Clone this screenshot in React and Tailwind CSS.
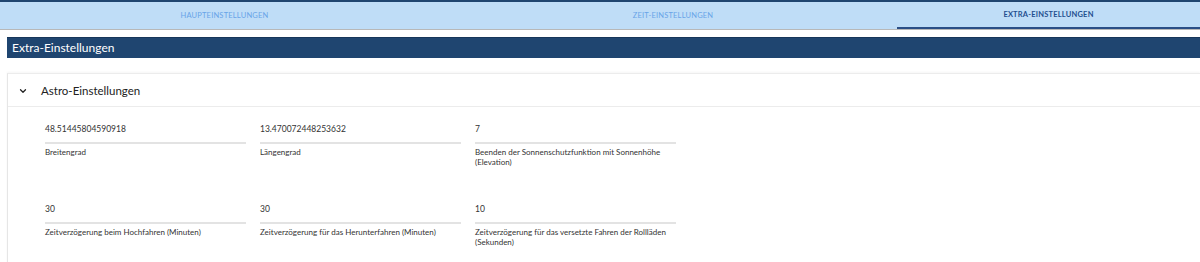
import { ChevronDown } from 'lucide-react'

const tabs = [
  { label: 'HAUPTEINSTELLUNGEN', w: 'w-[449px]' },
  { label: 'ZEIT-EINSTELLUNGEN', w: 'w-[448px]' },
  { label: 'EXTRA-EINSTELLUNGEN', w: 'flex-1', active: true },
]

const rows = [
  [
    { value: '48.51445804590918', label: 'Breitengrad' },
    { value: '13.470072448253632', label: 'Längengrad' },
    { value: '7', label: 'Beenden der Sonnenschutzfunktion mit Sonnenhöhe (Elevation)' },
  ],
  [
    { value: '30', label: 'Zeitverzögerung beim Hochfahren (Minuten)' },
    { value: '30', label: 'Zeitverzögerung für das Herunterfahren (Minuten)' },
    { value: '10', label: 'Zeitverzögerung für das versetzte Fahren der Rollläden (Sekunden)' },
  ],
]

const Field = ({ value, label }) => (
  <div className="w-[201px]">
    <div className="h-[24px] pt-[3px] text-[8.5px] leading-[12px] text-[#333] border-b-2 border-[#e3e3e3]">{value}</div>
    <div className="pt-[3px] text-[8px] leading-[10px] text-[#333] pr-[10px]">{label}</div>
  </div>
)

const App = () => {
  return (
    <div className="w-[1200px] h-[262px] overflow-hidden bg-white font-['Lato',sans-serif]">
      <div className="border-t-2 border-[#1f4570] bg-[#bfddf7] border-b border-b-[#b8b8b8] flex h-[30px]">
        {tabs.map((t) => (
          <div
            key={t.label}
            className={`${t.w} flex items-center justify-center pt-[1px] text-[7.5px] tracking-[0.2px] ${t.active ? 'text-[#1f4f8f] font-bold border-b-2 border-[#2b4f86]' : 'text-[#68a4e8]'}`}
          >
            {t.label}
          </div>
        ))}
      </div>

      <div className="pl-[7px] pt-[7px]">
        <div className="h-[21px] bg-[#1f4570] border-t border-[#17365a] flex items-center pl-[5px] text-[12px] text-white">
          Extra-Einstellungen
        </div>

        <div className="mt-[15px] border-l border-[#e6e6e6] border-t border-t-[#ececec] shadow-[0_-1px_2px_rgba(0,0,0,0.04)]">
          <div className="h-[33px] flex items-center pt-[2px] border-b border-[#ececec]">
            <ChevronDown className="w-[10px] h-[10px] ml-[10px] text-[#222]" strokeWidth={3} />
            <span className="ml-[13px] text-[11.5px] text-[#222]">Astro-Einstellungen</span>
          </div>
          <div className="pl-[37px] pt-[13px] flex flex-col gap-[33px] pb-[20px]">
            {rows.map((r, i) => (
              <div key={i} className="flex gap-[14px] h-[47px]">
                {r.map((f) => (
                  <Field key={f.label} {...f} />
                ))}
              </div>
            ))}
          </div>
        </div>
      </div>
    </div>
  )
}

export default App
